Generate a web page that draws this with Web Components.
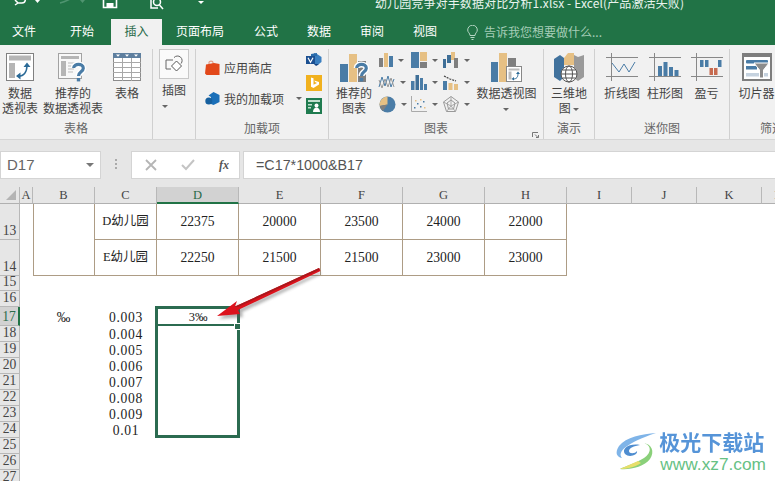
<!DOCTYPE html>
<html lang="zh">
<head>
<meta charset="utf-8">
<title>Excel</title>
<style>
html,body{margin:0;padding:0;background:#fff;overflow:hidden}
body{width:775px;height:481px;font-family:"Noto Sans CJK SC","Liberation Sans",sans-serif}
</style>
</head>
<body>
<excel-app></excel-app>
<script>
const B='#4a7ca6',T='#e6c084',G='#7f7f7f',L='#b9b9b9';
const qmark=(x,y,s=1,c='#4a7ca6')=>`<g transform="translate(${x} ${y}) scale(${s})"><path d="M1.7 5C1.7 .2 11.3 .2 11.3 5.3C11.3 9 6.5 8.6 6.5 13" fill="none" stroke="#fff" stroke-width="6"/><path d="M1.7 5C1.7 .2 11.3 .2 11.3 5.3C11.3 9 6.5 8.6 6.5 13" fill="none" stroke="${c}" stroke-width="3.2"/><rect x="4.8" y="15" width="3.4" height="3.4" fill="${c}"/></g>`;
const ICONS={
 pivot:[28,28,`<rect x=".5" y=".5" width="27" height="27" fill="#fff" stroke="#808080"/><rect x="3" y="2.5" width="22" height="5" fill="#b5b5b5"/><rect x="3" y="10" width="6" height="15" fill="#b5b5b5"/><path d="M11 23C18 24 21 19 21 12" fill="none" stroke="#2b6a97" stroke-width="1.5"/><path d="M17.5 14L21 9.5 24.5 14ZM14.5 19.5L10 23l4.5 3.5Z" fill="#2b6a97"/>`],
 recpivot:[30,30,`<rect x=".5" y=".5" width="23" height="25" fill="#f8f8f8" stroke="#a2a2a2"/><rect x="3" y="3" width="18" height="3" fill="#b5b5b5"/><rect x="3" y="8" width="5" height="15" fill="#b5b5b5"/><path d="M10 10h9M10 13h7M10 16h6M10 19h5" stroke="#bbb"/>${qmark(14,10)}`],
 table:[28,28,`<rect x=".5" y=".5" width="27" height="27" fill="#fff" stroke="#8c8c8c"/><rect width="28" height="5" fill="#5e7f9f"/><path d="M3 1.5h4l-2 2.3ZM12 1.5h4l-2 2.3ZM21 1.5h4l-2 2.3Z" fill="#fff"/><path d="M0 9.5h28M0 14.5h28M0 19.5h28M0 24.5h28M9.5 5v23M18.5 5v23" stroke="#a8a8a8"/>`],
 illus:[20,20,`<path d="M9 6H2v9h5" fill="none" stroke="#666"/><path d="M12.5 7l5 5-5 5-5-5Z" fill="#fff" stroke="#555"/><path d="M10 3.6a4.6 4.6 0 1 1 7 6" fill="none" stroke="#666"/>`],
 store:[15,16,`<path d="M4 4V2.5C4 .6 8 .6 8 2.5V4" fill="none" stroke="#e3a08a" stroke-width="1.2"/><path d="M1 4.5L9 3 14.5 4V15H1.5L0 13.5Z" fill="#e2481a"/>`],
 addin:[15,15,`<path d="M8.5 1L14.5 4V11L8.5 14 6 13V6L3.5 4.500Z" fill="#1a6fb8"/><circle cx="3.800" cy="10" r="3.500" fill="#16609f"/>`],
 visio:[16,13,`<path d="M8 0L11 1 15.500 4 15.500 9 11 12.500 8 11Z" fill="#3a7fc0"/><path d="M5 1L11 0V3H5Z" fill="#2a6cab"/><rect x="0" y="3" width="9" height="8" fill="#1b4f91"/><path d="M2 4.800l2.500 4.500L7 4.800" fill="none" stroke="#fff" stroke-width="1.200"/><path d="M8 11h5l-3 2Z" fill="#16407d"/>`],
 bing:[16,16,`<rect width="16" height="16" fill="#f1b11e"/><path d="M5 2.500L7.500 3.300V9.700L11 8 9 7 8.300 5.500 13 7V9.500L7.500 13 5 11.700Z" fill="#fff"/>`],
 people:[16,16,`<rect width="16" height="16" fill="#1f7b4f"/><rect x="2" y="2" width="12" height="2" fill="#bfe0cd"/><rect x="2" y="6" width="4" height="1.500" fill="#bfe0cd"/><rect x="2" y="9" width="3" height="1.500" fill="#bfe0cd"/><circle cx="10.500" cy="7.500" r="2" fill="#fff"/><path d="M7 14c0-6 7-6 7 0Z" fill="#fff"/>`],
 recchart:[31,30,`<rect x="1" y="11" width="8" height="18" fill="${B}"/><rect x="10" y="1" width="8" height="28" fill="${T}"/><rect x="19" y="8" width="8" height="21" fill="${G}"/>${qmark(16,10)}`],
 bars:[14,14,`<rect x="0" y="5" width="4" height="9" fill="${G}"/><rect x="5" y="0" width="4" height="14" fill="${T}"/><rect x="10" y="3" width="4" height="11" fill="${B}"/>`],
 tree:[16,16,`<rect width="8" height="16" fill="${B}"/><rect x="9" width="7" height="9" fill="${T}"/><rect x="9" y="10" width="7" height="6" fill="${G}"/>`],
 wfall:[16,16,`<rect x="0" y="7" width="3" height="9" fill="#3f6f97"/><rect x="4" y="3" width="4" height="8" fill="#3f6f97"/><rect x="8" y="0" width="4" height="8" fill="${T}"/><rect x="11" y="6" width="4" height="10" fill="${G}"/>`],
 zig:[16,16,`<path d="M0 13L3 3 6 12 9 2 12 13 15 5" fill="none" stroke="#4a7ca6"/><path d="M0 6L3 14 6 5 9 13 12 4 15 13" fill="none" stroke="#999"/>`],
 hist:[16,16,`<rect x="0" y="7" width="3.500" height="9" fill="${B}"/><rect x="4.500" y="1" width="3.500" height="15" fill="#3f6f97"/><rect x="9" y="4" width="3" height="12" fill="${B}"/><rect x="13" y="10" width="3" height="6" fill="${B}"/>`],
 combo:[16,16,`<rect x="0" y="7" width="4" height="9" fill="${B}"/><rect x="5.500" y="9" width="4" height="7" fill="${T}"/><rect x="11" y="10" width="4" height="6" fill="${T}"/><path d="M1 2L7 5 13 7" fill="none" stroke="#444" stroke-width="1.200" stroke-dasharray="2 1"/>`],
 pie:[17,17,`<circle cx="8.500" cy="8.500" r="8" fill="${B}"/><path d="M8.500 8.500V.5A8 8 0 0 0 .7 10Z" fill="${T}"/><path d="M8.500 8.500L.7 10A8 8 0 0 0 4 15Z" fill="${G}"/>`],
 scatter:[16,16,`<path d="M.5 0V15.500H16" fill="none" stroke="#aaa"/><path d="M3 11h1.500v1.500H3ZM6 7h1.500v1.500H6ZM9 10h1.500v1.500H9ZM12 5h1.500v1.500H12Z" fill="${B}"/><path d="M4 4h1.500v1.500H4ZM9 3h1.500v1.500H9ZM13 11h1.500v1.500H13Z" fill="${T}"/>`],
 radar:[16,16,`<path d="M8 .5L15.500 6 12.500 15.500H3.500L.5 6Z" fill="none" stroke="#999"/><path d="M8 .5V10M15.500 6L8 10M12.500 15.500L8 10M3.500 15.500L8 10M.5 6L8 10" stroke="#aaa" fill="none"/><path d="M8 4L12 7 10.500 13H5.500L4 7Z" fill="none" stroke="#999"/>`],
 pivotchart:[31,30,`<rect x="0" y="9" width="7" height="20" fill="${B}"/><rect x="8" y="0" width="8" height="29" fill="${T}"/><rect x="17" y="5" width="8" height="10" fill="${G}"/><rect x="15.500" y="13.500" width="15" height="15" fill="#fff" stroke="#888"/><rect x="17.500" y="15.500" width="11" height="2" fill="#bbb"/><rect x="17.500" y="18.500" width="3" height="8" fill="#bbb"/><path d="M22 26c4 0 5-2 5-6" fill="none" stroke="#2b6a97"/><path d="M25 21l2-2.500 2 2.500ZM23 24l-2.500 2 2.500 1.500Z" fill="#2b6a97"/>`],
 map3d:[30,30,`<path d="M0 6L6 2 10 5V24L6 28 0 24Z" fill="#41729d"/><path d="M10 5L14 0 20 0V12H10Z" fill="${T}"/><path d="M20 2L24 4 30 2V24L24 28 20 25Z" fill="#9a9a9a"/><circle cx="15" cy="21" r="8" fill="#fff" stroke="#555"/><ellipse cx="15" cy="21" rx="3.500" ry="8" fill="none" stroke="#555"/><path d="M7 21h16M8.500 17h13M8.500 25h13" stroke="#555" fill="none"/>`],
 sline:[32,28,`<path d="M0 4.500h32M0 23.500h32M5.500 0v28" stroke="#888" fill="none"/><path d="M6 10L13 19 18 11 23 19 29 9" fill="none" stroke="#4a7ca6"/>`],
 scol:[32,28,`<path d="M0 4.500h32M0 23.500h32M5.500 0v28" stroke="#888" fill="none"/><rect x="9" y="13" width="4" height="10" fill="${B}"/><rect x="14.500" y="9" width="4" height="14" fill="${B}"/><rect x="20" y="14" width="4" height="9" fill="${B}"/><rect x="25.500" y="17" width="4" height="6" fill="${B}"/>`],
 swin:[32,28,`<path d="M0 4.500h32M0 23.500h32M5.500 0v28" stroke="#888" fill="none"/><rect x="9" y="7" width="3.500" height="7" fill="${B}"/><rect x="14" y="7" width="3.500" height="7" fill="${B}"/><rect x="27" y="7" width="3.500" height="7" fill="${B}"/><rect x="18.500" y="15" width="3.500" height="7" fill="#c76b50"/><rect x="23" y="15" width="3.500" height="7" fill="#c76b50"/>`],
 slicer:[30,28,`<rect x="1" y="1" width="28" height="26" fill="#fff" stroke="#7e7e7e" stroke-width="2"/><rect x="1" y="0" width="28" height="4" fill="#7e7e7e"/><rect x="4" y="7" width="22" height="3.500" rx="1" fill="#4a7ca6"/><rect x="4" y="13" width="11" height="3.500" fill="#4a7ca6"/><rect x="4" y="20" width="22" height="3.500" fill="#c5d2df"/><path d="M12 10H27L21.500 17V25H17.500V17Z" fill="#8c8c8c" stroke="#fff"/>`]
};
const def=(name,css,html,init)=>{customElements.define(name,class extends HTMLElement{
 connectedCallback(){ if(this.shadowRoot) return; const s=this.attachShadow({mode:'open'}); s.innerHTML=`<style>${css}</style>${typeof html==='function'?html(this):html}`; if(init) init(this,s);}
});};

def('r-icon',':host{display:block;line-height:0}svg{display:block;overflow:visible}',el=>{const [w,h,c]=ICONS[el.getAttribute('name')];return `<svg width="${w}" height="${h}" viewBox="0 0 ${w} ${h}" aria-hidden="true">${c}</svg>`;});

def('r-caret',':host{display:inline-block;width:0;height:0;border:3px solid transparent;border-top:3px solid #666;border-bottom:0;vertical-align:middle}','');

def('title-bar',`:host{display:flex;height:19px;background:#217346;overflow:hidden;color:#e9f3ee;font-size:12px}
svg{flex:none}
span{line-height:14px;margin-top:-4px;white-space:nowrap;letter-spacing:.12px}`,
`<svg width="375" height="19" viewBox="0 0 375 19" fill="none" stroke="#fff" stroke-width="1.500" aria-hidden="true">
<path d="M15 0L18 3 15 5M18 3H22C26 3 26 -2 24 -3"/><path d="M35 0h5l-2.500 3Z" fill="#fff" stroke="none"/>
<path d="M74 -2C70 -2 68 1 60 3" stroke="#4f9470"/><path d="M80 0h5l-2.500 3Z" fill="#4f9470" stroke="none"/>
<path d="M103.500 -3V7.500H116.500V-3" stroke-width="1.600"/><rect x="106.500" y="3" width="7" height="4.500" fill="#fff" stroke="none"/>
<path d="M151 -3V8H158" /><circle cx="157" cy="2" r="3.500"/><path d="M159.500 5L163 9"/>
<path d="M198 1h6l-3 3Z" fill="#fff" stroke="none"/></svg>
<span>幼儿园竞争对手数据对比分析1.xlsx - Excel(产品激活失败)</span>`);

def('tab-bar',`:host{display:flex;height:26px;background:#217346;color:#fff;font-size:12px;line-height:24px}
.tell{display:flex;align-items:center;gap:6px;margin-left:17px;color:#a5cdb7}
svg{display:block}`,
`<slot></slot><div class="tell"><svg width="11" height="15" viewBox="0 0 11 15" fill="none" stroke="#b6d6c4" aria-hidden="true"><path d="M3 10.500C3 8 .7 7.500 .7 5a4.800 4.800 0 0 1 9.600 0c0 2.500-2.300 3-2.300 5.500Z"/><path d="M3.500 12.500h4M4.500 14.500h2"/></svg><span>告诉我您想要做什么...</span></div>`);

def('r-tab',`:host{display:block;text-align:center;box-sizing:border-box;height:26px}
:host([active]){background:#f1f1f1;color:#2a6b49}`,'<slot></slot>');

def('ribbon-bar',`:host{display:flex;height:94px;background:#f1f1f1;border-bottom:1px solid #d6d6d6;box-sizing:content-box;overflow:hidden;color:#444;font-size:12px}`,'<slot></slot>');

def('r-group',`:host{display:flex;flex-direction:column;flex:none;box-sizing:border-box;height:90px;margin-top:4px;position:relative}
:host([sep]){border-right:1px solid #d0d0d0}
.c{flex:1;display:flex;min-height:0}
.l{height:20px;line-height:17px;text-align:center;color:#666;font-size:12px}
.launch{position:absolute;right:4px;bottom:1px;width:7px;height:6px;}`,
el=>`<div class="c"><slot></slot></div><div class="l">${el.getAttribute('label')}${el.hasAttribute('launcher')?'<svg class="launch" viewBox="0 0 7 6" fill="none" stroke="#777" aria-hidden="true"><path d="M.5 5V.5H6M3 2.500L6 5.500M6.500 3V5.500H4"/></svg>':''}</div>`);

def('r-btn',`:host{display:flex;flex-direction:column;align-items:center;flex:none;padding-top:4px;line-height:15px;text-align:center;white-space:nowrap}
.i{height:30px;margin-bottom:2px;display:flex;align-items:flex-start;justify-content:center}`,
`<div class="i"><slot name="icon"></slot></div><div><slot></slot></div>`);

def('r-illus',`:host{display:flex;flex-direction:column;align-items:center;margin:0 0 0 6px;line-height:15px}
.box{width:30px;height:30px;box-sizing:border-box;background:#fafafa;border:1px solid #c8c8c8;display:flex;align-items:center;justify-content:center;margin-bottom:3px}`,
`<div class="box"><slot name="icon"></slot></div><div><slot></slot></div>`);

def('r-row',`:host{display:flex;align-items:center;gap:4px;height:31px;white-space:nowrap}`,'<slot></slot>');
def('r-col',`:host{display:flex;flex-direction:column;flex:none}`,'<slot></slot>');

def('chart-grid',`:host{display:grid;grid-template-columns:repeat(3,32px);grid-auto-rows:22px;align-items:center;flex:none}`,'<slot></slot>');
def('chart-item',`:host{display:flex;align-items:center;gap:5px}`,'<slot></slot><r-caret></r-caret>');

def('formula-bar',`:host{display:flex;height:47px;box-sizing:border-box;padding:11px 0 10px;background:#e6e6e6;color:#666}
.box{height:26px;background:#fff;border:1px solid #d4d4d4;box-sizing:content-box}
.name{width:99px;display:flex;align-items:center;justify-content:space-between;font:15px/26px "Liberation Sans",sans-serif;color:#666}
.name span{margin-left:6px}
.name i{width:0;height:0;border:4px solid transparent;border-top:4px solid #777;border-bottom:0;margin-right:6px}
.dots{width:30px;display:flex;flex-direction:column;align-items:center;justify-content:center;gap:2px}
.dots b{width:2px;height:2px;background:#aaa;display:block}
.btns{width:107px;display:flex;align-items:center;justify-content:space-between}
.btns svg{display:block}
.btns .x{margin-left:13px}.btns .f{margin-right:10px;font:italic bold 12px "Liberation Serif",serif;color:#555}
.fx{flex:1;margin-left:3px;font:14.300px/26px "Liberation Sans",sans-serif;color:#555;padding-left:12px;border-right:0}`,
`<div class="box name"><span>D17</span><i></i></div><div class="dots"><b></b><b></b><b></b></div>
<div class="box btns"><svg class="x" width="12" height="12" viewBox="0 0 12 12" stroke="#b5b5b5" stroke-width="1.800" aria-hidden="true"><path d="M1 1L11 11M11 1L1 11"/></svg><svg width="14" height="12" viewBox="0 0 14 12" fill="none" stroke="#c4c4c4" stroke-width="2" aria-hidden="true"><path d="M1 6L5 10 13 1"/></svg><span class="f">fx</span></div>
<div class="box fx">=C17*1000&amp;B17</div>`);

def('sheet-grid',`:host{display:grid;grid-template-columns:20px 13px 62px 62px 82px 82px 82px 82px 82px 65px 65px 65px 33px;grid-template-rows:17px 36px 36px 15px 16px 19px repeat(10,16px);height:294px;overflow:hidden;background:#fff;font:13.600px/1 "Liberation Serif","Noto Sans CJK SC",serif;color:#222;position:relative}
.ch{background:#e6e6e6;border-right:1px solid #b8b8b8;border-bottom:1px solid #b0b0b0;box-sizing:border-box;text-align:center;line-height:16px;color:#444;font-size:12.500px}
.ch.on{background:#d2d2d2;border-bottom:2px solid #217346;color:#2a6b49}
.corner{position:relative}
.corner::after{content:"";position:absolute;right:3px;bottom:3px;border:5px solid transparent;border-right-color:#b4b4b4;border-bottom-color:#b4b4b4}
.rh{grid-column:1;background:#e6e6e6;border-right:1px solid #b8b8b8;border-bottom:1px solid #b8b8b8;box-sizing:border-box;display:flex;align-items:flex-end;justify-content:center;line-height:16px;color:#444}
.rh.on{background:#d2d2d2;border-right:2px solid #217346;color:#2a6b49}
.c{display:flex;align-items:center;justify-content:center;box-sizing:border-box;white-space:nowrap}
.t{border-right:1px solid #ad9c85;border-bottom:1px solid #ad9c85}
.cjk{font-size:12.500px}
.dec{letter-spacing:.7px;padding-top:2px}
.val{padding-top:2px;font-size:12.500px}
.sel{grid-column:5;grid-row:6/14;border:3px solid #2b6b50;margin:-1px -1px 0 -2px;box-sizing:border-box;position:relative;pointer-events:none}
.sel::before{content:"";display:block;height:15px;border-bottom:2px solid #2b6b50}
.sel::after{content:"";position:absolute;right:-4px;top:14px;width:5px;height:5px;background:#2b6b50;border:1px solid #fff}`,
()=>{
 const cols=['A','B','C','D','E','F','G','H','I','J','K','L'];
 let h='<div class="ch corner" style="grid-row:1;grid-column:1"></div>';
 cols.forEach((c,i)=>{h+=`<div class="ch${c==='D'?' on':''}" style="grid-row:1;grid-column:${i+2}">${c}</div>`});
 const rows=[13,14,15,16,17,18,19,20,21,22,23,24,25,26,27];
 rows.forEach((r,i)=>{h+=`<div class="rh${r===17?' on':''}" style="grid-row:${i+2}">${r}</div>`});
 const cell=(col,row,txt,cls='')=>`<div class="c ${cls}" style="grid-column:${col};grid-row:${row}">${txt}</div>`;
 h+=`<div class="c t" style="grid-column:3;grid-row:2/4;border-left:1px solid #ad9c85"></div>`;
 const data=[['D幼儿园',22375,20000,23500,24000,22000],['E幼儿园',22250,21500,21500,23000,23000]];
 data.forEach((d,r)=>{d.forEach((v,c)=>{h+=cell(c+4,r+2,v,'t'+(c===0?' cjk':''))})});
 h+=cell(3,6,'‰','dec');
 ['0.003','0.004','0.005','0.006','0.007','0.008','0.009','0.01'].forEach((v,i)=>{h+=cell(4,6+i,v,'dec')});
 h+=cell(5,6,'3‰','val');
 h+='<div class="sel"></div>';
 return h;
});

def('call-out',`:host{display:block;position:absolute;left:0;top:0;width:775px;height:481px;pointer-events:none}
svg{display:block}`,
`<svg width="775" height="481" viewBox="0 0 775 481" aria-hidden="true"><defs><filter id="b" x="-20%" y="-20%" width="140%" height="140%"><feGaussianBlur stdDeviation="1.500"/></filter></defs>
<path d="M219 319L239 304 238 309 320 272 321 274 242 312 243 317Z" fill="#555" opacity=".45" filter="url(#b)"/>
<path d="M217 316L237 301 235 306.500 319 268 320.500 271 238 310 240 314Z" fill="#dc121c"/>
<path d="M235 306.500L319 268 320 269.500 238 307Z" fill="#a8181c"/></svg>`);

def('water-mark',`:host{display:flex;position:absolute;right:9px;bottom:8px;align-items:center;pointer-events:none;white-space:nowrap}
svg{display:block;flex:none;margin-right:1px;margin-top:-2px}
.a{font:700 21px/22px "Noto Sans CJK SC",sans-serif;color:#4d8fd6;opacity:.95}
.b{font:400 17.300px/18px "Liberation Sans",sans-serif;color:#66c184;margin-top:3px;margin-left:1px}`,
`<svg width="44" height="40" viewBox="0 0 44 40" fill="none" aria-hidden="true"><path d="M42 2C28 3 12 6 5 15 1 21 2 26 8 27 3 21 12 12 42 2Z" fill="#7fb4e8"/><path d="M26 14C15 12 7 18 11 23 15 27 24 24 23 20 21 23 15 23 15 20 15 17 20 15 26 14Z" fill="#4f8dd0"/><path d="M28 12C38 13 38 22 30 27 22 32 12 35 6 38 16 39 30 36 36 28 41 21 38 12 28 12Z" fill="#8ad07a"/><path d="M24 30C18 33 12 35 6 38 13 38 21 36 27 32Z" fill="#e8df6a"/></svg>
<div><div class="a">极光下载站</div><div class="b">www.xz7.com</div></div>`);

def('excel-app',`:host{display:block;position:relative;width:775px;height:481px;overflow:hidden;font-family:"Noto Sans CJK SC","Liberation Sans",sans-serif}`,
`<title-bar></title-bar>
<tab-bar>
 <r-tab style="width:48px">文件</r-tab><r-tab style="width:48px;margin-left:10px">开始</r-tab><r-tab active style="width:51px;margin-left:5px">插入</r-tab><r-tab style="width:76px">页面布局</r-tab><r-tab style="width:56px">公式</r-tab><r-tab style="width:50px">数据</r-tab><r-tab style="width:56px">审阅</r-tab><r-tab style="width:50px">视图</r-tab>
</tab-bar>
<ribbon-bar>
 <r-group label="表格" sep style="width:153px">
  <r-btn style="width:40px"><r-icon slot="icon" name="pivot"></r-icon>数据<br>透视表</r-btn>
  <r-btn style="width:66px"><r-icon slot="icon" name="recpivot"></r-icon>推荐的<br>数据透视表</r-btn>
  <r-btn style="width:42px"><r-icon slot="icon" name="table"></r-icon>表格</r-btn>
 </r-group>
 <r-group label="" sep style="width:43px">
  <r-illus><r-icon slot="icon" name="illus"></r-icon>插图<br><r-caret></r-caret></r-illus>
 </r-group>
 <r-group label="加载项" sep style="width:133px">
  <r-col style="margin:3px 0 0 9px;width:101px;">
   <r-row><r-icon name="store"></r-icon>应用商店</r-row>
   <r-row><r-icon name="addin"></r-icon><span>我的加载项</span><r-caret style="margin-left:8px"></r-caret></r-row>
  </r-col>
  <r-col style="margin:4px 0 0 0;"><r-icon name="visio"></r-icon><r-icon name="bing" style="margin-top:9px"></r-icon><r-icon name="people" style="margin-top:7px"></r-icon></r-col>
 </r-group>
 <r-group label="图表" sep launcher style="width:215px">
  <r-btn style="width:50px"><r-icon slot="icon" name="recchart"></r-icon>推荐的<br>图表</r-btn>
  <chart-grid style="height:66px;">
   <chart-item><r-icon name="bars"></r-icon></chart-item><chart-item><r-icon name="tree"></r-icon></chart-item><chart-item><r-icon name="wfall"></r-icon></chart-item>
   <chart-item><r-icon name="zig"></r-icon></chart-item><chart-item><r-icon name="hist"></r-icon></chart-item><chart-item><r-icon name="combo"></r-icon></chart-item>
   <chart-item><r-icon name="pie"></r-icon></chart-item><chart-item><r-icon name="scatter"></r-icon></chart-item><chart-item><r-icon name="radar"></r-icon></chart-item>
  </chart-grid>
  <r-btn style="width:63px"><r-icon slot="icon" name="pivotchart"></r-icon>数据透视图<br><r-caret></r-caret></r-btn>
 </r-group>
 <r-group label="演示" sep style="width:51px">
  <r-btn style="width:50px"><r-icon slot="icon" name="map3d"></r-icon>三维地<br>图 <r-caret></r-caret></r-btn>
 </r-group>
 <r-group label="迷你图" sep style="width:135px">
  <r-btn style="width:44px;margin-left:5px"><r-icon slot="icon" name="sline"></r-icon>折线图</r-btn>
  <r-btn style="width:42px"><r-icon slot="icon" name="scol"></r-icon>柱形图</r-btn>
  <r-btn style="width:41px"><r-icon slot="icon" name="swin"></r-icon>盈亏</r-btn>
 </r-group>
 <r-group label="筛选器" style="width:96px">
  <r-btn style="width:45px;margin-left:4px"><r-icon slot="icon" name="slicer"></r-icon>切片器</r-btn>
 </r-group>
</ribbon-bar>
<formula-bar></formula-bar>
<sheet-grid></sheet-grid>
<call-out></call-out>
<water-mark></water-mark>`);
</script>
</body>
</html>
